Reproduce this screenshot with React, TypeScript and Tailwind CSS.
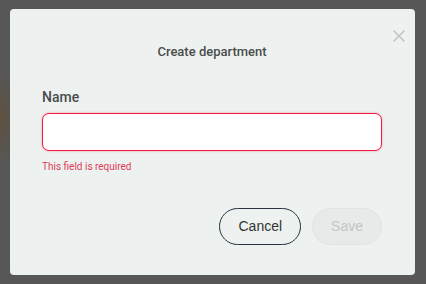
import { X } from "lucide-react";

export default function App() {
  return (
    <div className="w-[426px] h-[284px] overflow-hidden bg-[#565756] bg-[radial-gradient(ellipse_30px_45px_at_0px_118px,#5f5142_0%,#565756_100%)] pt-[9px] pl-[10px] font-['Roboto',sans-serif]">
      {/* Dialog */}
      <div className="relative w-[405px] h-[266px] rounded-[4px] bg-[#edf2f0] pl-[32px] pr-[33px] pt-[35px]">
        <button className="absolute top-[17px] right-[6px] text-[#bfc3c2]">
          <X size={20} strokeWidth={1.8} />
        </button>

        <h2 className="text-center text-[13px] leading-[16px] font-medium text-[#4a4c4c]">Create department</h2>

        <div className="mt-[29px]">
          <label className="block text-[14px] leading-[16px] font-medium text-[#4a4c4c]">Name</label>
          <input
            className="mt-[8px] block w-[340px] h-[38px] rounded-[7px] bg-white border border-[#f2173d] shadow-[0_0_2px_rgba(242,23,61,0.45)] outline-none px-3"
          />
          <p className="mt-[10px] text-[10px] leading-[12px] text-[#e03c56]">This field is required</p>
        </div>

        <div className="mt-[35px] flex justify-end gap-[11px] font-['Liberation_Sans',Arial,sans-serif] text-[14px]">
          <button className="h-[37px] px-[18px] rounded-full border border-[#2b3040] text-[#333333]">Cancel</button>
          <button disabled className="h-[37px] px-[18px] rounded-full border border-[#dfe2e1] bg-[#e8eaea] text-[#c2c4c4]">Save</button>
        </div>
      </div>
    </div>
  );
}
